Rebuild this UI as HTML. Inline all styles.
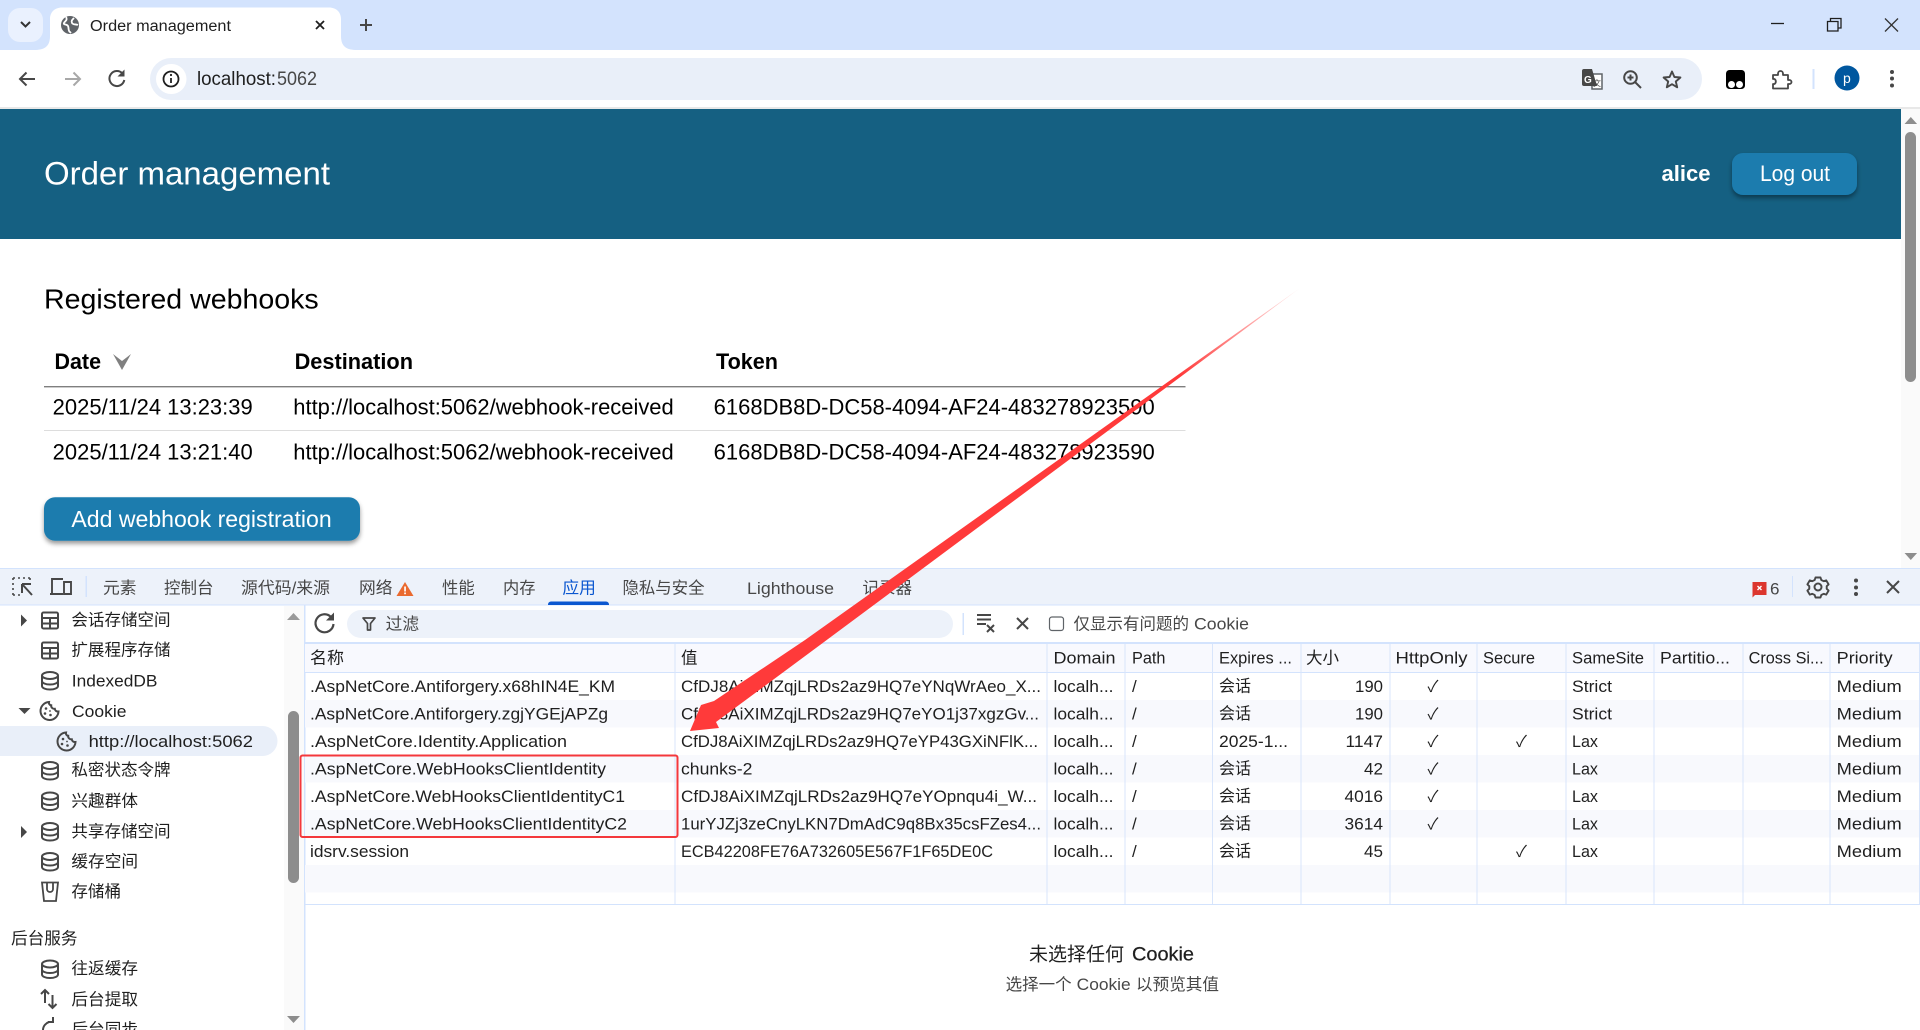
<!DOCTYPE html>
<html lang="zh"><head><meta charset="utf-8"><title>Order management</title>
<style>
html,body{margin:0;padding:0;width:1920px;height:1030px;overflow:hidden;background:#fff}
svg{display:block}
text{font-family:"Liberation Sans","Noto Sans CJK SC",sans-serif;white-space:pre}
.d{font-size:17px;fill:#1f1f1f}
.c{font-size:16.25px;fill:#1f1f1f}
.t{font-size:16.25px;fill:#474747}
.tl{font-size:17px;fill:#474747}
.p{font-size:21.8px;fill:#000}
.b{font-size:21.8px;font-weight:700;fill:#000}
.k{font-size:16px;fill:#1f1f1f}
</style></head><body>
<svg xmlns="http://www.w3.org/2000/svg" width="1920" height="1030" viewBox="0 0 1920 1030">
<defs>
<g id="db" fill="none" stroke="#474747" stroke-width="2"><ellipse cx="9" cy="4.5" rx="8" ry="3.5"/><path d="M1 4.5V15c0 2 3.5 3.5 8 3.5s8-1.500 8-3.500V4.500M1 10c0 2 3.500 3.500 8 3.500s8-1.500 8-3.500"/></g>
<g id="tb" fill="none" stroke="#474747" stroke-width="2"><rect x="1" y="1" width="16" height="16" rx="1.500"/><path d="M1 6.500H17M1 12H17M9 6.500V17"/></g>
<g id="ck"><path d="M10 1.500a9 9 0 1 0 9.500 9.500c-2 .3-3.500-.8-3.700-2.700-2.200.2-3.800-1.300-3.600-3.500-1.700-.2-2.600-1.700-2.200-3.300z" fill="none" stroke="#474747" stroke-width="2"/><circle cx="7" cy="8" r="1.300" fill="#474747"/><circle cx="6" cy="13" r="1.300" fill="#474747"/><circle cx="11.500" cy="14.500" r="1.300" fill="#474747"/><circle cx="11" cy="10.500" r=".9" fill="#474747"/></g>
<linearGradient id="fade" gradientUnits="userSpaceOnUse" x1="1300" y1="288" x2="1180" y2="377"><stop offset="0" stop-color="#ff3a3a" stop-opacity=".1"/><stop offset="1" stop-color="#ff3a3a"/></linearGradient>
<clipPath id="side"><rect x="0" y="606" width="284" height="424"/></clipPath>
<filter id="sh" x="-10%" y="-20%" width="120%" height="160%"><feDropShadow dx="0" dy="3" stdDeviation="2.500" flood-color="#000" flood-opacity=".4"/></filter>
</defs>

<!-- Browser frame -->
<rect width="1920" height="50" fill="#d3e3fd"/>
<path d="M0 107V60a10 10 0 0 1 10-10H1910a10 10 0 0 1 10 10V107z" fill="#fff"/>
<rect x="0" y="107" width="1920" height="2" fill="#e8e8e8"/>
<rect x="8" y="8" width="35" height="34" rx="12" fill="#eaf1fe"/>
<path d="M21 22l4.500 4.500L30 22" fill="none" stroke="#333" stroke-width="2"/>
<path d="M34 50c10 0 16-3 16-14V19c0-7 5-11.500 12-11.500h267c7 0 12 4.500 12 11.500v17c0 11 6 14 16 14v6H34z" fill="#fff"/>
<circle cx="70" cy="25" r="9" fill="#5f6368"/>
<path d="M66 17c2 3-1 4-2 6s3 1 4 3 0 5 2 6l1 1M74 18c-2 2-3 3-2 5s4 1 6 2" fill="none" stroke="#fff" stroke-width="1.800"/>
<text x="90" y="31" font-size="15.500" fill="#1f1f1f" textLength="141" lengthAdjust="spacingAndGlyphs">Order management</text>
<path d="M316 21l8 8M324 21l-8 8" stroke="#1f1f1f" stroke-width="1.800"/>
<path d="M360 25h12M366 19v12" stroke="#474747" stroke-width="2"/>
<path d="M1771 23.500h13" stroke="#1f1f1f" stroke-width="1.300"/>
<path d="M1827.500 21.500h10.500v9.500h-10.500zM1830.500 21.500v-3h10.500v9.500h-3" fill="none" stroke="#1f1f1f" stroke-width="1.300"/>
<path d="M1885 18.500l13 13M1898 18.500l-13 13" stroke="#333" stroke-width="1.300"/>

<path d="M35 79H20M26.500 72.500L20 79l6.500 6.500" fill="none" stroke="#474747" stroke-width="2"/>
<path d="M65 79H80M73.500 72.500L80 79l-6.500 6.500" fill="none" stroke="#a8a8a8" stroke-width="2"/>
<path d="M122.500 73.500a7.500 7.500 0 1 0 1.800 6.500" fill="none" stroke="#474747" stroke-width="2"/><path d="M124.500 69.500v7h-7z" fill="#474747"/>
<rect x="150" y="58" width="1552" height="42" rx="21" fill="#e9eff9"/>
<rect x="156" y="64" width="30.500" height="30" rx="15" fill="#fff"/>
<circle cx="171" cy="79" r="7.500" fill="none" stroke="#1f1f1f" stroke-width="1.800"/><path d="M171 78v5" stroke="#1f1f1f" stroke-width="1.800"/><circle cx="171" cy="75" r="1.100" fill="#1f1f1f"/>
<text x="197" y="85" font-size="19.500" fill="#1f1f1f" textLength="79" lengthAdjust="spacingAndGlyphs">localhost:</text>
<text x="277" y="85" font-size="19.500" fill="#474747" textLength="40" lengthAdjust="spacingAndGlyphs">5062</text>
<!-- translate -->
<rect x="1592" y="74" width="10" height="15" fill="#fff" stroke="#5f6368" stroke-width="1.500"/>
<path d="M1582 71a2 2 0 0 1 2-2h8l5 17h-13a2 2 0 0 1-2-2z" fill="#474747"/>
<text x="1584" y="83" font-size="10" font-weight="700" fill="#fff">G</text>
<text x="1593" y="86" font-size="8" fill="#474747">文</text>
<!-- zoom -->
<circle cx="1630.500" cy="77.500" r="6.300" fill="none" stroke="#474747" stroke-width="2"/><path d="M1635 82l6 6M1627.500 77.500h6M1630.500 74.500v6" stroke="#474747" stroke-width="2"/>
<!-- star -->
<path d="M1672 71.500l2.400 5.500 6 .5-4.600 4 1.400 5.800-5.200-3.100-5.200 3.100 1.400-5.800-4.600-4 6-.5z" fill="none" stroke="#474747" stroke-width="1.900" stroke-linejoin="round"/>
<!-- extension -->
<rect x="1726" y="70" width="19" height="19" rx="3.500" fill="#000"/><circle cx="1731.500" cy="84.500" r="3.500" fill="#fff"/><circle cx="1739.500" cy="84.500" r="3.500" fill="#fff"/>
<path d="M1773 75h5v-1.500a2.500 2.500 0 0 1 5 0V75h5v5h1.500a2 2 0 0 1 0 4H1788v4.500h-15V84h1.500a3 3 0 0 0 0-5H1773z" fill="none" stroke="#474747" stroke-width="1.800" stroke-linejoin="round"/>
<rect x="1812.500" y="69" width="2" height="20" fill="#d3e3fd"/>
<circle cx="1847" cy="78" r="12.500" fill="#00579f"/>
<text x="1843" y="83" font-size="14" fill="#fff">p</text>
<circle cx="1892" cy="72" r="2" fill="#474747"/><circle cx="1892" cy="78.500" r="2" fill="#474747"/><circle cx="1892" cy="85.500" r="2" fill="#474747"/>

<!-- Page header -->
<rect x="0" y="109" width="1901" height="130" fill="#156082"/>
<text x="44" y="184.300" font-size="32" fill="#fff" textLength="286" lengthAdjust="spacingAndGlyphs">Order management</text>
<text x="1661.500" y="181" font-size="21.800" font-weight="700" fill="#fff" textLength="49" lengthAdjust="spacingAndGlyphs">alice</text>
<rect x="1732" y="153" width="125" height="42" rx="11" fill="#1a7bae" filter="url(#sh)"/>
<text x="1760" y="181" font-size="21.800" fill="#fff" textLength="70" lengthAdjust="spacingAndGlyphs">Log out</text>

<!-- Page content -->
<text x="44" y="308.300" font-size="27.500" fill="#000" textLength="274.700" lengthAdjust="spacingAndGlyphs">Registered webhooks</text>
<text class="b" x="54.500" y="369" textLength="46.500" lengthAdjust="spacingAndGlyphs">Date</text>
<path d="M113 354l9 7 9-7-9 16z" fill="#808080"/>
<text class="b" x="294.600" y="369" textLength="118.400" lengthAdjust="spacingAndGlyphs">Destination</text>
<text class="b" x="716" y="369" textLength="62" lengthAdjust="spacingAndGlyphs">Token</text>
<rect x="44" y="386" width="1141.500" height="1.400" fill="#7f7f7f"/>
<rect x="44" y="430" width="1141.500" height="1" fill="#ddd"/>
<text class="p" x="52.700" y="414.700" textLength="200" lengthAdjust="spacingAndGlyphs">2025/11/24 13:23:39</text>
<text class="p" x="293.300" y="414.700" textLength="380.400" lengthAdjust="spacingAndGlyphs">http://localhost:5062/webhook-received</text>
<text class="p" x="713.700" y="414.700" textLength="441" lengthAdjust="spacingAndGlyphs">6168DB8D-DC58-4094-AF24-483278923590</text>
<text class="p" x="52.700" y="459.700" textLength="200" lengthAdjust="spacingAndGlyphs">2025/11/24 13:21:40</text>
<text class="p" x="293.300" y="459.700" textLength="380.400" lengthAdjust="spacingAndGlyphs">http://localhost:5062/webhook-received</text>
<text class="p" x="713.700" y="459.700" textLength="441" lengthAdjust="spacingAndGlyphs">6168DB8D-DC58-4094-AF24-483278923590</text>
<rect x="44" y="497.300" width="316" height="43.400" rx="11" fill="#1a7bae" filter="url(#sh)"/>
<text x="71.400" y="527" font-size="23" fill="#fff" textLength="260.300" lengthAdjust="spacingAndGlyphs">Add webhook registration</text>

<!-- Page scrollbar -->
<rect x="1901" y="109" width="19" height="459" fill="#fafafa"/>
<path d="M1904.500 124l6.300-7 6.300 7z" fill="#8d8d8d"/>
<rect x="1905" y="132" width="11" height="250" rx="5.500" fill="#8d8d8d"/>
<path d="M1904.500 553l6.300 7 6.300-7z" fill="#8d8d8d"/>

<!-- DevTools tabs -->
<rect x="0" y="568" width="1920" height="462" fill="#fff"/>
<rect x="0" y="568" width="1920" height="37" fill="#edf2fa"/>
<rect x="0" y="568" width="1920" height="1" fill="#d3e3fd"/>
<rect x="0" y="604.500" width="1920" height="1" fill="#d3e3fd"/>
<path d="M13 578h2M18 578h2M23 578h2M28 578h2M13 578v2M13 583v2M13 588v2M13 593v2M13 595h2M18 595h2M30 578v2M30 583v2" stroke="#474747" stroke-width="1.600" fill="none"/>
<path d="M22 584h9M22 584v9M22 584l10 11" stroke="#474747" stroke-width="2" fill="none"/>
<path d="M52 593v-14h11M50 594h13M64 582h7v12h-7z" fill="none" stroke="#474747" stroke-width="1.900"/>
<rect x="85.500" y="576" width="1.500" height="21" fill="#d3e3fd"/>
<text class="t" x="103" y="593.500" textLength="33.500" lengthAdjust="spacingAndGlyphs">元素</text>
<text class="t" x="164" y="593.500" textLength="49.500" lengthAdjust="spacingAndGlyphs">控制台</text>
<text class="t" x="241" y="593.500" textLength="89" lengthAdjust="spacingAndGlyphs">源代码/来源</text>
<text class="t" x="359" y="593.500" textLength="33.500" lengthAdjust="spacingAndGlyphs">网络</text>
<path d="M405 582l8.500 14h-17z" fill="#ea6a2f"/><rect x="404.200" y="586.500" width="1.700" height="5" fill="#fff"/><rect x="404.200" y="592.500" width="1.700" height="1.700" fill="#fff"/>
<text class="t" x="442" y="593.500" textLength="32.700" lengthAdjust="spacingAndGlyphs">性能</text>
<text class="t" x="503" y="593.500" textLength="32.500" lengthAdjust="spacingAndGlyphs">内存</text>
<text x="562.400" y="593.500" font-size="16.250" fill="#0b57d0" textLength="33.500" lengthAdjust="spacingAndGlyphs">应用</text>
<path d="M548 605v-.5a3 3 0 0 1 3-3h55a3 3 0 0 1 3 3v.5z" fill="#0b57d0"/>
<text class="t" x="622.500" y="593.500" textLength="82" lengthAdjust="spacingAndGlyphs">隐私与安全</text>
<text class="tl" x="747" y="594" textLength="87" lengthAdjust="spacingAndGlyphs">Lighthouse</text>
<text class="t" x="862.400" y="593.500" textLength="49.600" lengthAdjust="spacingAndGlyphs">记录器</text>
<path d="M1752.500 582h14v13h-11.500l-2.500 2.500z" fill="#dc362e"/><path d="M1757.500 586l4 4M1761.500 586l-4 4" stroke="#fff" stroke-width="1.400"/>
<text class="tl" x="1770" y="594.500" textLength="9.500" lengthAdjust="spacingAndGlyphs">6</text>
<rect x="1792" y="576" width="1" height="21" fill="#d3e3fd"/>
<circle cx="1818" cy="587" r="3.500" fill="none" stroke="#474747" stroke-width="2"/>
<path d="M1815.500 577.500h5l.8 2.500 2.400 1.200 2.500-.8 2.400 4-1.900 1.800v2.600l1.900 1.800-2.400 4-2.500-.8-2.400 1.200-.8 2.500h-5l-.8-2.500-2.400-1.200-2.500.8-2.400-4 1.900-1.800v-2.600l-1.900-1.800 2.400-4 2.500.8 2.400-1.200z" fill="none" stroke="#474747" stroke-width="1.900" stroke-linejoin="round"/>
<circle cx="1856" cy="580.500" r="2" fill="#474747"/><circle cx="1856" cy="587.500" r="2" fill="#474747"/><circle cx="1856" cy="594" r="2" fill="#474747"/>
<path d="M1887 581l12 12M1899 581l-12 12" stroke="#474747" stroke-width="2"/>

<!-- Sidebar -->
<rect x="284" y="606" width="20" height="424" fill="#fafafa"/>
<rect x="304" y="605" width="1.500" height="425" fill="#d3e3fd"/>
<path d="M287 620l6.500-7 6.500 7z" fill="#9a9a9a"/>
<rect x="288" y="711" width="11" height="172" rx="5.500" fill="#8d8d8d"/>
<path d="M287 1016l6.500 7 6.500-7z" fill="#8d8d8d"/>
<path d="M0 726H262.500a15 15 0 0 1 0 30H0z" fill="#e9eff9"/>
<g clip-path="url(#side)">
<path d="M21 614.500l6 6-6 6z" fill="#474747"/>
<use href="#tb" x="41" y="611.500"/><text class="c" x="71.400" y="625.700" textLength="99.200" lengthAdjust="spacingAndGlyphs">会话存储空间</text>
<use href="#tb" x="41" y="641.500"/><text class="c" x="71.400" y="655.700" textLength="99.200" lengthAdjust="spacingAndGlyphs">扩展程序存储</text>
<use href="#db" x="41" y="671"/><text class="d" x="71.800" y="686.500" textLength="85.700" lengthAdjust="spacingAndGlyphs">IndexedDB</text>
<path d="M18.500 708h12l-6 6z" fill="#474747"/>
<use href="#ck" x="39" y="700.500"/><text class="d" x="72" y="717" textLength="54.500" lengthAdjust="spacingAndGlyphs">Cookie</text>
<use href="#ck" x="56" y="731"/><text class="d" x="88.600" y="747" textLength="164.400" lengthAdjust="spacingAndGlyphs">http://localhost:5062</text>
<use href="#db" x="41" y="761"/><text class="c" x="71.400" y="775.700" textLength="99.200" lengthAdjust="spacingAndGlyphs">私密状态令牌</text>
<use href="#db" x="41" y="791.500"/><text class="c" x="71.400" y="806.700" textLength="66.600" lengthAdjust="spacingAndGlyphs">兴趣群体</text>
<path d="M21 826l6 6-6 6z" fill="#474747"/>
<use href="#db" x="41" y="822"/><text class="c" x="71.400" y="837.200" textLength="99.200" lengthAdjust="spacingAndGlyphs">共享存储空间</text>
<use href="#db" x="41" y="852"/><text class="c" x="71.400" y="867.200" textLength="66.600" lengthAdjust="spacingAndGlyphs">缓存空间</text>
<path d="M42 882.500h16l-2 18.500H44z" fill="none" stroke="#474747" stroke-width="1.800"/><path d="M47 883v6c0 4 6 4 6 0v-6" fill="none" stroke="#474747" stroke-width="1.800"/>
<text class="c" x="71.400" y="897.200" textLength="49.600" lengthAdjust="spacingAndGlyphs">存储桶</text>
<text class="c" x="11" y="944.200" textLength="66.500" lengthAdjust="spacingAndGlyphs">后台服务</text>
<use href="#db" x="41" y="959.500"/><text class="c" x="71.400" y="974.200" textLength="66.600" lengthAdjust="spacingAndGlyphs">往返缓存</text>
<path d="M45 1003V990M41 994l4-4 4 4M52.500 995v13M48.500 1004l4 4 4-4" fill="none" stroke="#474747" stroke-width="2"/>
<text class="c" x="71.400" y="1005.200" textLength="66.600" lengthAdjust="spacingAndGlyphs">后台提取</text>
<path d="M43 1030c0-4 3-7 6-8M48 1022h5v-5" fill="none" stroke="#474747" stroke-width="2"/>
<text class="c" x="71.400" y="1035.200" textLength="66.600" lengthAdjust="spacingAndGlyphs">后台同步</text>
</g>

<!-- Cookie toolbar -->
<path d="M331 617a9 9 0 1 0 2.500 7" fill="none" stroke="#474747" stroke-width="2.200"/><path d="M334 612.500v8h-8z" fill="#474747"/>
<rect x="347" y="610" width="606" height="28" rx="14" fill="#edf2fa"/>
<path d="M363 618h12l-4.500 5.500v6.500h-3v-6.500z" fill="none" stroke="#474747" stroke-width="1.700" stroke-linejoin="round"/>
<text class="t" x="385.700" y="629.300" textLength="33.300" lengthAdjust="spacingAndGlyphs">过滤</text>
<rect x="962.500" y="613" width="1.500" height="22" fill="#d3e3fd"/>
<path d="M977 615h14M977 619.500h14M977 624h9M987 625l7 7M994 625l-7 7" stroke="#474747" stroke-width="2" fill="none"/>
<path d="M1017 618l11 11M1028 618l-11 11" stroke="#474747" stroke-width="2"/>
<rect x="1049.500" y="617" width="14" height="13.500" rx="2.500" fill="#fff" stroke="#5f6368" stroke-width="1.200"/>
<text class="t" x="1073.500" y="629.300" textLength="115.500" lengthAdjust="spacingAndGlyphs">仅显示有问题的</text>
<text class="tl" x="1194" y="629.500" textLength="55" lengthAdjust="spacingAndGlyphs">Cookie</text>

<!-- Cookie table -->
<rect x="305" y="642" width="1615" height="2" fill="#d3e3fd"/>
<rect x="305" y="644" width="1615" height="28" fill="#f8f9fe"/>
<rect x="305" y="672" width="1615" height="1" fill="#d3e3fd"/>
<rect x="305" y="700" width="1615" height="27.500" fill="#f8f9fd"/>
<rect x="305" y="755" width="1615" height="27.500" fill="#f8f9fd"/>
<rect x="305" y="810" width="1615" height="27.500" fill="#f8f9fd"/>
<rect x="305" y="865" width="1615" height="27.500" fill="#f8f9fd"/>
<rect x="305" y="904" width="1615" height="1" fill="#d3e3fd"/>
<g fill="#d8e5fb">
<rect x="674.500" y="644" width="1" height="260"/><rect x="1046.500" y="644" width="1" height="260"/><rect x="1124.500" y="644" width="1" height="260"/><rect x="1212" y="644" width="1" height="260"/><rect x="1300.500" y="644" width="1" height="260"/><rect x="1389.500" y="644" width="1" height="260"/><rect x="1476.500" y="644" width="1" height="260"/><rect x="1565.500" y="644" width="1" height="260"/><rect x="1653.500" y="644" width="1" height="260"/><rect x="1742.500" y="644" width="1" height="260"/><rect x="1829.500" y="644" width="1" height="260"/><rect x="1919" y="644" width="1" height="260"/>
</g>
<!-- header -->
<text class="c" x="310" y="663.300" textLength="34" lengthAdjust="spacingAndGlyphs">名称</text>
<text class="c" x="681" y="663.300" textLength="16.500" lengthAdjust="spacingAndGlyphs">值</text>
<text class="d" x="1053.500" y="663.500" textLength="62" lengthAdjust="spacingAndGlyphs">Domain</text>
<text class="d" x="1132" y="663.500" textLength="33.500" lengthAdjust="spacingAndGlyphs">Path</text>
<text class="d" x="1219" y="663.500" textLength="73" lengthAdjust="spacingAndGlyphs">Expires ...</text>
<text class="c" x="1306" y="663.300" textLength="33" lengthAdjust="spacingAndGlyphs">大小</text>
<text class="d" x="1395.500" y="663.500" textLength="72" lengthAdjust="spacingAndGlyphs">HttpOnly</text>
<text class="d" x="1483" y="663.500" textLength="52" lengthAdjust="spacingAndGlyphs">Secure</text>
<text class="d" x="1572" y="663.500" textLength="72" lengthAdjust="spacingAndGlyphs">SameSite</text>
<text class="d" x="1660" y="663.500" textLength="70" lengthAdjust="spacingAndGlyphs">Partitio...</text>
<text class="d" x="1748.600" y="663.500" textLength="75" lengthAdjust="spacingAndGlyphs">Cross Si...</text>
<text class="d" x="1836.700" y="663.500" textLength="56" lengthAdjust="spacingAndGlyphs">Priority</text>

<!-- row 1 -->
<text class="d" x="310" y="692" textLength="305" lengthAdjust="spacingAndGlyphs">.AspNetCore.Antiforgery.x68hIN4E_KM</text>
<text class="d" x="681" y="692" textLength="360" lengthAdjust="spacingAndGlyphs">CfDJ8AiXIMZqjLRDs2az9HQ7eYNqWrAeo_X...</text>
<text class="d" x="1053.500" y="692" textLength="60" lengthAdjust="spacingAndGlyphs">localh...</text>
<text class="d" x="1132" y="692">/</text>
<text class="c" x="1219" y="691.500" textLength="32" lengthAdjust="spacingAndGlyphs">会话</text>
<text class="d" x="1355" y="692" textLength="28" lengthAdjust="spacingAndGlyphs">190</text>
<text class="k" x="1427.500" y="692">✓</text>
<text class="d" x="1572" y="692" textLength="40" lengthAdjust="spacingAndGlyphs">Strict</text>
<text class="d" x="1836.700" y="692" textLength="65" lengthAdjust="spacingAndGlyphs">Medium</text>
<!-- row 2 -->
<text class="d" x="310" y="719.500" textLength="298" lengthAdjust="spacingAndGlyphs">.AspNetCore.Antiforgery.zgjYGEjAPZg</text>
<text class="d" x="681" y="719.500" textLength="358" lengthAdjust="spacingAndGlyphs">CfDJ8AiXIMZqjLRDs2az9HQ7eYO1j37xgzGv...</text>
<text class="d" x="1053.500" y="719.500" textLength="60" lengthAdjust="spacingAndGlyphs">localh...</text>
<text class="d" x="1132" y="719.500">/</text>
<text class="c" x="1219" y="719" textLength="32" lengthAdjust="spacingAndGlyphs">会话</text>
<text class="d" x="1355" y="719.500" textLength="28" lengthAdjust="spacingAndGlyphs">190</text>
<text class="k" x="1427.500" y="719.500">✓</text>
<text class="d" x="1572" y="719.500" textLength="40" lengthAdjust="spacingAndGlyphs">Strict</text>
<text class="d" x="1836.700" y="719.500" textLength="65" lengthAdjust="spacingAndGlyphs">Medium</text>
<!-- row 3 -->
<text class="d" x="310" y="747" textLength="257" lengthAdjust="spacingAndGlyphs">.AspNetCore.Identity.Application</text>
<text class="d" x="681" y="747" textLength="357" lengthAdjust="spacingAndGlyphs">CfDJ8AiXIMZqjLRDs2az9HQ7eYP43GXiNFlK...</text>
<text class="d" x="1053.500" y="747" textLength="60" lengthAdjust="spacingAndGlyphs">localh...</text>
<text class="d" x="1132" y="747">/</text>
<text class="d" x="1219" y="747" textLength="69" lengthAdjust="spacingAndGlyphs">2025-1...</text>
<text class="d" x="1345.500" y="747" textLength="37.500" lengthAdjust="spacingAndGlyphs">1147</text>
<text class="k" x="1427.500" y="747">✓</text>
<text class="k" x="1516" y="747">✓</text>
<text class="d" x="1572" y="747" textLength="26" lengthAdjust="spacingAndGlyphs">Lax</text>
<text class="d" x="1836.700" y="747" textLength="65" lengthAdjust="spacingAndGlyphs">Medium</text>
<!-- row 4 -->
<text class="d" x="310" y="774.500" textLength="296" lengthAdjust="spacingAndGlyphs">.AspNetCore.WebHooksClientIdentity</text>
<text class="d" x="681" y="774.500" textLength="71.400" lengthAdjust="spacingAndGlyphs">chunks-2</text>
<text class="d" x="1053.500" y="774.500" textLength="60" lengthAdjust="spacingAndGlyphs">localh...</text>
<text class="d" x="1132" y="774.500">/</text>
<text class="c" x="1219" y="774" textLength="32" lengthAdjust="spacingAndGlyphs">会话</text>
<text class="d" x="1364" y="774.500" textLength="19" lengthAdjust="spacingAndGlyphs">42</text>
<text class="k" x="1427.500" y="774.500">✓</text>
<text class="d" x="1572" y="774.500" textLength="26" lengthAdjust="spacingAndGlyphs">Lax</text>
<text class="d" x="1836.700" y="774.500" textLength="65" lengthAdjust="spacingAndGlyphs">Medium</text>
<!-- row 5 -->
<text class="d" x="310" y="802" textLength="315" lengthAdjust="spacingAndGlyphs">.AspNetCore.WebHooksClientIdentityC1</text>
<text class="d" x="681" y="802" textLength="356" lengthAdjust="spacingAndGlyphs">CfDJ8AiXIMZqjLRDs2az9HQ7eYOpnqu4i_W...</text>
<text class="d" x="1053.500" y="802" textLength="60" lengthAdjust="spacingAndGlyphs">localh...</text>
<text class="d" x="1132" y="802">/</text>
<text class="c" x="1219" y="801.500" textLength="32" lengthAdjust="spacingAndGlyphs">会话</text>
<text class="d" x="1344.500" y="802" textLength="38.500" lengthAdjust="spacingAndGlyphs">4016</text>
<text class="k" x="1427.500" y="802">✓</text>
<text class="d" x="1572" y="802" textLength="26" lengthAdjust="spacingAndGlyphs">Lax</text>
<text class="d" x="1836.700" y="802" textLength="65" lengthAdjust="spacingAndGlyphs">Medium</text>
<!-- row 6 -->
<text class="d" x="310" y="829.500" textLength="317" lengthAdjust="spacingAndGlyphs">.AspNetCore.WebHooksClientIdentityC2</text>
<text class="d" x="681" y="829.500" textLength="360" lengthAdjust="spacingAndGlyphs">1urYJZj3zeCnyLKN7DmAdC9q8Bx35csFZes4...</text>
<text class="d" x="1053.500" y="829.500" textLength="60" lengthAdjust="spacingAndGlyphs">localh...</text>
<text class="d" x="1132" y="829.500">/</text>
<text class="c" x="1219" y="829" textLength="32" lengthAdjust="spacingAndGlyphs">会话</text>
<text class="d" x="1344.500" y="829.500" textLength="38.500" lengthAdjust="spacingAndGlyphs">3614</text>
<text class="k" x="1427.500" y="829.500">✓</text>
<text class="d" x="1572" y="829.500" textLength="26" lengthAdjust="spacingAndGlyphs">Lax</text>
<text class="d" x="1836.700" y="829.500" textLength="65" lengthAdjust="spacingAndGlyphs">Medium</text>
<!-- row 7 -->
<text class="d" x="310" y="857" textLength="99" lengthAdjust="spacingAndGlyphs">idsrv.session</text>
<text class="d" x="681" y="857" textLength="312" lengthAdjust="spacingAndGlyphs">ECB42208FE76A732605E567F1F65DE0C</text>
<text class="d" x="1053.500" y="857" textLength="60" lengthAdjust="spacingAndGlyphs">localh...</text>
<text class="d" x="1132" y="857">/</text>
<text class="c" x="1219" y="856.500" textLength="32" lengthAdjust="spacingAndGlyphs">会话</text>
<text class="d" x="1364" y="857" textLength="19" lengthAdjust="spacingAndGlyphs">45</text>
<text class="k" x="1516" y="857">✓</text>
<text class="d" x="1572" y="857" textLength="26" lengthAdjust="spacingAndGlyphs">Lax</text>
<text class="d" x="1836.700" y="857" textLength="65" lengthAdjust="spacingAndGlyphs">Medium</text>

<!-- Empty preview -->
<text x="1029" y="960.700" font-size="19" fill="#1f1f1f" textLength="95" lengthAdjust="spacingAndGlyphs">未选择任何</text>
<text x="1132" y="960.700" font-size="19" fill="#1f1f1f" stroke="#1f1f1f" stroke-width=".25" textLength="62" lengthAdjust="spacingAndGlyphs">Cookie</text>
<text x="1005.700" y="990" font-size="16.250" fill="#474747" textLength="66" lengthAdjust="spacingAndGlyphs">选择一个</text>
<text x="1076.700" y="990" font-size="17" fill="#474747" textLength="54" lengthAdjust="spacingAndGlyphs">Cookie</text>
<text x="1136" y="990" font-size="16.250" fill="#474747" textLength="83" lengthAdjust="spacingAndGlyphs">以预览其值</text>

<!-- Annotations -->
<rect x="300.500" y="755.500" width="377" height="81.500" rx="2" fill="none" stroke="#f4383c" stroke-width="2"/>
<path d="M1300 288L820 645 716 722l3 6-29 3 11-26 13-4L805 640z" fill="url(#fade)"/>
</svg>
</body></html>
